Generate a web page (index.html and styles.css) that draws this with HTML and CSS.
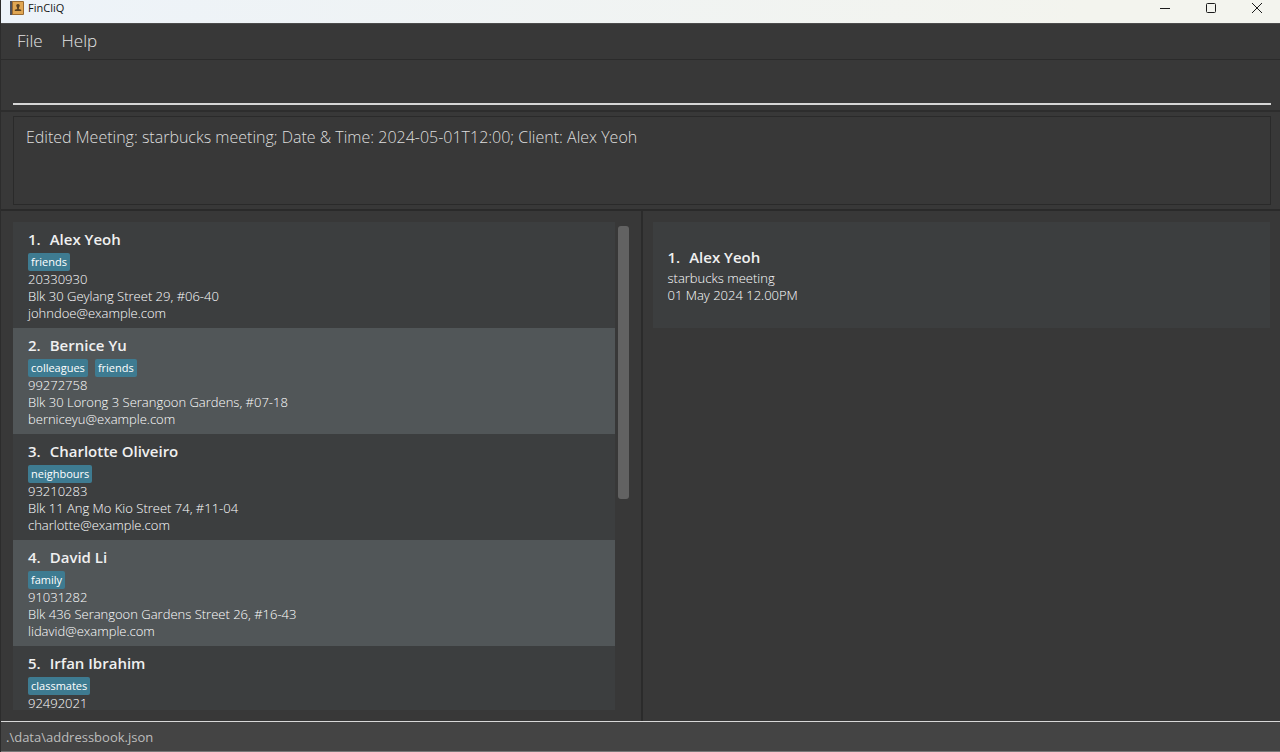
FILE: index.html
```html
<!DOCTYPE html>
<html lang="en">
<head>
<meta charset="utf-8">
<title>FinCliQ</title>
<link rel="stylesheet" href="styles.css">
</head>
<body>
<div class="app">
  <header class="titlebar">
    <svg class="logo" viewBox="0 0 14 14" aria-hidden="true">
      <rect width="14" height="14" rx="1" fill="#9a6a30"/>
      <rect width="2" height="14" fill="#50515a"/>
      <rect x="3" y="1" width="10" height="12" fill="#e0a652"/>
      <path d="M8 3a1.7 1.7 0 0 1 1.500 2.600L8.900 7v1l2.300.800V10H4.800V8.800L7.100 8V7l-.600-1.400A1.700 1.700 0 0 1 8 3z" fill="#5c4220"/>
    </svg>
    <span class="app-name">FinCliQ</span>
    <div class="window-controls">
      <button class="window-button" aria-label="Minimize"><svg viewBox="0 0 12 12"><path d="M1 6.500h10"/></svg></button>
      <button class="window-button" aria-label="Maximize"><svg viewBox="0 0 12 12"><rect x="1.500" y="1.500" width="9" height="9" rx="1"/></svg></button>
      <button class="window-button" aria-label="Close"><svg viewBox="0 0 12 12"><path d="M1 1l10 10M11 1L1 11"/></svg></button>
    </div>
  </header>
  <nav class="menubar">
    <button class="menu">File</button>
    <button class="menu">Help</button>
  </nav>
  <div class="command">
    <input class="command-input" type="text" aria-label="Command">
  </div>
  <div class="result">
    <output class="result-box">Edited Meeting: starbucks meeting; Date &amp; Time: 2024-05-01T12:00; Client: Alex Yeoh</output>
  </div>
  <main class="panes">
    <section class="pane clients" aria-label="Clients">
      <ol class="list">
        <li class="card">
          <h2 class="name"><span>1.</span><span>Alex Yeoh</span></h2>
          <div class="tags"><span class="tag">friends</span></div>
          <p class="line">20330930</p>
          <p class="line">Blk 30 Geylang Street 29, #06-40</p>
          <p class="line">johndoe@example.com</p>
        </li>
        <li class="card">
          <h2 class="name"><span>2.</span><span>Bernice Yu</span></h2>
          <div class="tags"><span class="tag">colleagues</span><span class="tag">friends</span></div>
          <p class="line">99272758</p>
          <p class="line">Blk 30 Lorong 3 Serangoon Gardens, #07-18</p>
          <p class="line">berniceyu@example.com</p>
        </li>
        <li class="card">
          <h2 class="name"><span>3.</span><span>Charlotte Oliveiro</span></h2>
          <div class="tags"><span class="tag">neighbours</span></div>
          <p class="line">93210283</p>
          <p class="line">Blk 11 Ang Mo Kio Street 74, #11-04</p>
          <p class="line">charlotte@example.com</p>
        </li>
        <li class="card">
          <h2 class="name"><span>4.</span><span>David Li</span></h2>
          <div class="tags"><span class="tag">family</span></div>
          <p class="line">91031282</p>
          <p class="line">Blk 436 Serangoon Gardens Street 26, #16-43</p>
          <p class="line">lidavid@example.com</p>
        </li>
        <li class="card">
          <h2 class="name"><span>5.</span><span>Irfan Ibrahim</span></h2>
          <div class="tags"><span class="tag">classmates</span></div>
          <p class="line">92492021</p>
        </li>
      </ol>
      <div class="scrollbar"><div class="thumb"></div></div>
    </section>
    <section class="pane meetings" aria-label="Meetings">
      <ol class="list">
        <li class="card meeting">
          <h2 class="name"><span>1.</span><span>Alex Yeoh</span></h2>
          <p class="line">starbucks meeting</p>
          <p class="line">01 May 2024 12.00PM</p>
        </li>
      </ol>
    </section>
  </main>
  <footer class="statusbar">.\data\addressbook.json</footer>
</div>
</body>
</html>
```
FILE: styles.css
```css
* {
  box-sizing: border-box;
  margin: 0;
  padding: 0;
}

body {
  font-family: "Open Sans", "Noto Sans", sans-serif;
  background: #383838;
  color: #f0f0f0;
}

.app {
  display: flex;
  flex-direction: column;
  height: 100vh;
  border-left: 1px solid #2c2c2c;
}

.titlebar {
  display: flex;
  align-items: center;
  flex: none;
  height: 23px;
  padding-bottom: 7px;
  padding-left: 9px;
  background: linear-gradient(90deg, #edf3f9, #f3f4ee 85%);
  color: #151515;
}

.logo {
  width: 14px;
  height: 14px;
}

.app-name {
  margin-left: 4px;
  font-size: 11px;
  line-height: 16px;
}

.window-controls {
  display: flex;
  margin-left: auto;
}

.window-button {
  display: grid;
  place-items: center;
  width: 46px;
  height: 16px;
  border: 0;
  background: none;
}

.window-button svg {
  width: 12px;
  height: 12px;
  fill: none;
  stroke: #1b1b1b;
}

.menubar {
  display: flex;
  gap: 19px;
  flex: none;
  height: 37px;
  padding: 0 16px;
  border-top: 1px solid #4c4c4c;
  border-bottom: 1px solid #2b2b2b;
}

.menu {
  height: 33px;
  border: 0;
  background: none;
  color: #e4e4e4;
  font: 300 17px/33px "Open Sans", "Noto Sans", sans-serif;
}

.command {
  display: flex;
  flex: none;
  height: 52px;
  padding: 6px 9px 5px 12px;
  border-bottom: 2px solid #2d2d2d;
}

.command-input {
  flex: 1;
  border: 0;
  border-bottom: 2px solid #d6d6d6;
  outline: 0;
  background: transparent;
  color: #e8e8e8;
  font: 300 17px "Open Sans", "Noto Sans", sans-serif;
}

.result {
  display: flex;
  flex: none;
  height: 99px;
  padding: 4px 9px 4px 12px;
  border-bottom: 2px solid #2a2a2a;
}

.result-box {
  flex: 1;
  padding: 8px 12px;
  border: 1px solid #2a2a2a;
  color: #dedede;
  font-size: 16px;
  font-weight: 300;
  line-height: 24px;
}

.panes {
  display: grid;
  grid-template-columns: 1fr 1fr;
  flex: 1;
  min-height: 0;
}

.pane {
  display: flex;
  min-height: 0;
  padding: 11px 10px 11px 12px;
}

.clients {
  gap: 3px;
  padding-right: 12px;
}

.meetings {
  padding-left: 10px;
  border-left: 2px solid #2b2b2b;
}

.list {
  flex: 1;
  overflow: hidden;
  list-style: none;
}

.card {
  height: 106px;
  padding: 7px 15px 0;
  background: #3c3e3f;
}

.card:nth-child(even) {
  background: #515658;
}

.meeting {
  padding-top: 25px;
}

.name {
  display: flex;
  gap: 9px;
  margin-bottom: 4px;
  font-size: 15px;
  font-weight: 600;
  line-height: 20px;
}

.meeting .name {
  margin-bottom: 3px;
}

.tags {
  display: flex;
  gap: 7px;
}

.tag {
  padding: 0 3px;
  border-radius: 2px;
  background: #3e7b91;
  color: #fff;
  font-size: 11px;
  line-height: 18px;
}

.line {
  color: #fff;
  font-size: 13px;
  font-weight: 300;
  line-height: 17px;
}

.scrollbar {
  width: 11px;
  padding: 4px 0 14px;
}

.thumb {
  height: 58%;
  border-radius: 3px;
  background: #626262;
}

.statusbar {
  flex: none;
  height: 31px;
  padding: 0 5px;
  border-top: 1px solid #d8d8d8;
  border-bottom: 1px solid #777;
  background: #444;
  color: #bdbdbd;
  font-size: 13px;
  line-height: 31px;
}
```
